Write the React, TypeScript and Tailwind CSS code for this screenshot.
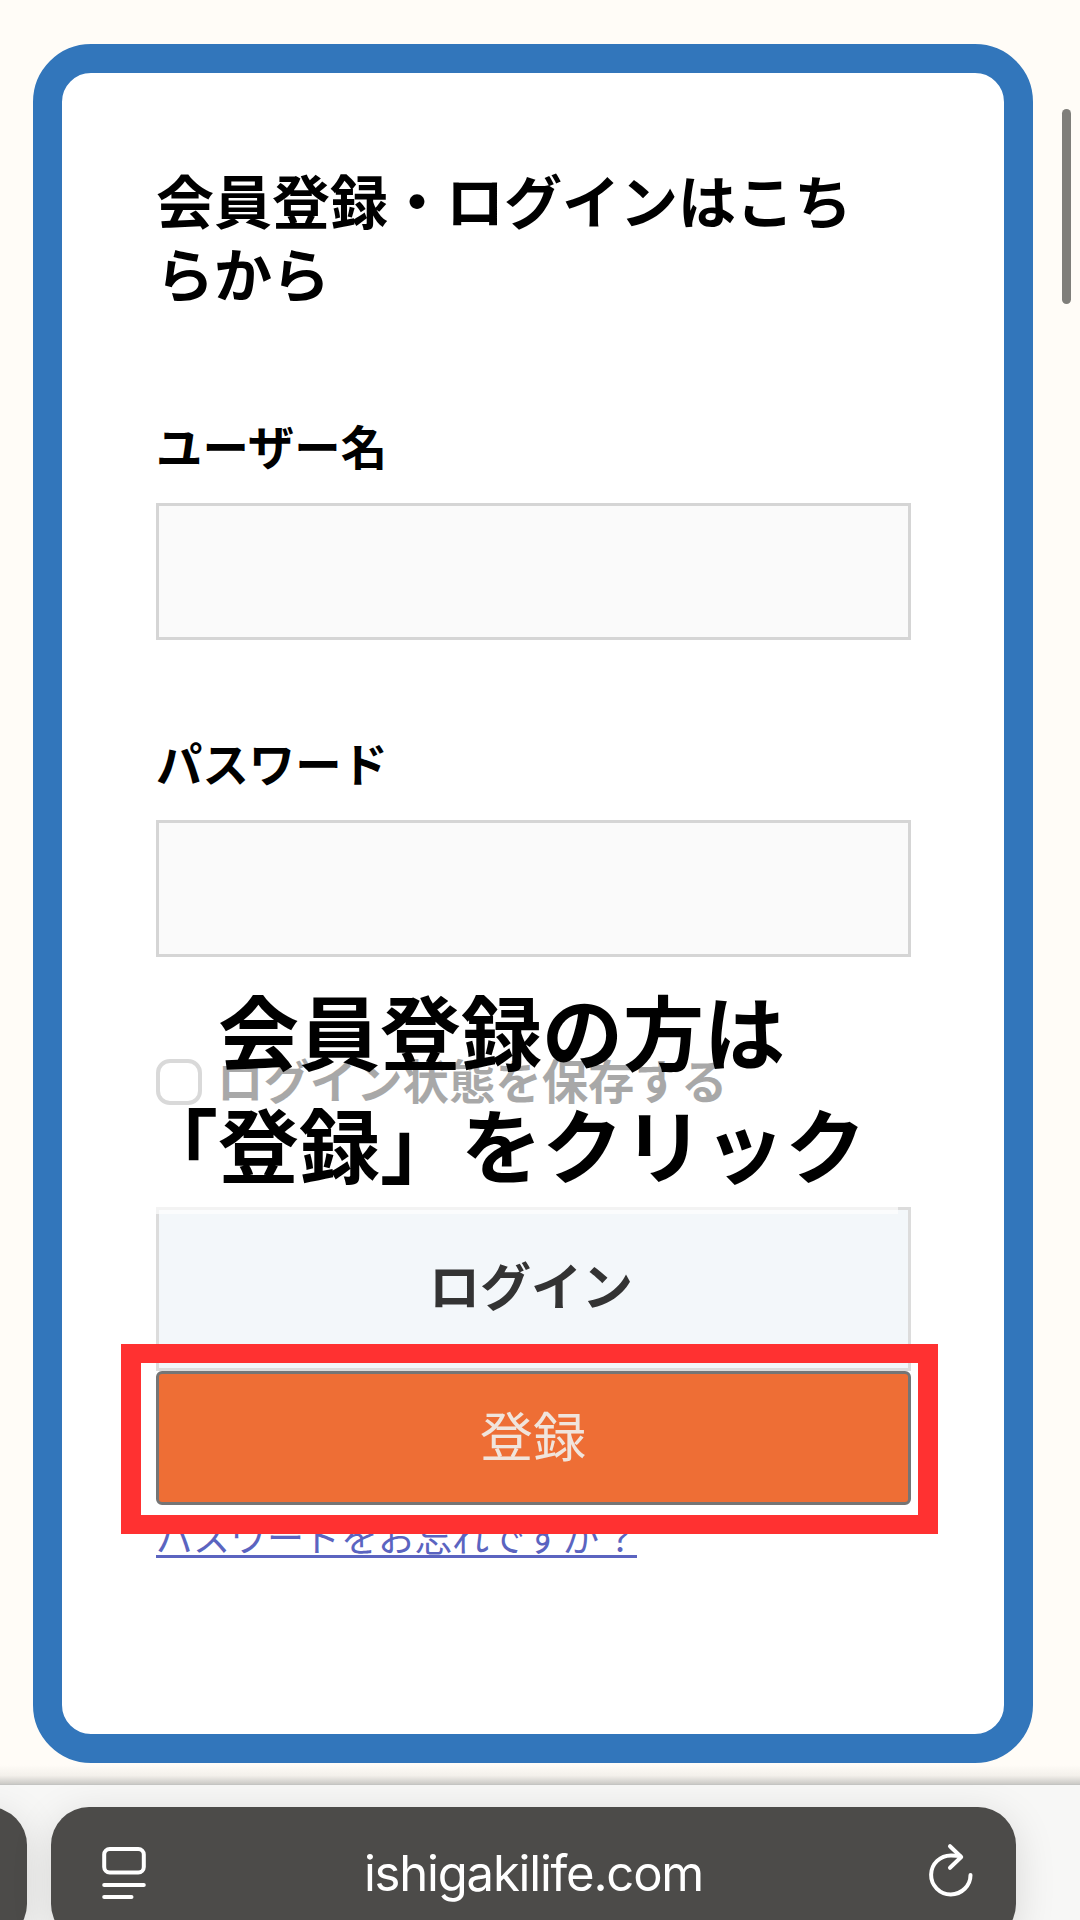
import { useState } from 'react';

interface FieldProps {
  id: string;
  label: string;
  type: string;
  className?: string;
}

function Field({ id, label, type, className = '' }: FieldProps) {
  const [value, setValue] = useState('');

  return (
    <div className={className}>
      <label htmlFor={id} className="block h-[60px] text-[46.4px] leading-[55px] font-bold text-black">
        {label}
      </label>
      <input
        id={id}
        type={type}
        value={value}
        onChange={(e) => setValue(e.target.value)}
        className="mt-[26px] block h-[137px] w-full border-3 border-[#d5d5d5] bg-[#fafafa] px-6 text-[46px] outline-none"
      />
    </div>
  );
}

function LoginCard() {
  const [remember, setRemember] = useState(false);

  return (
    <div className="mt-[44px] ml-[33px] h-[1719px] w-[1000px] rounded-[58px] border-[29px] border-[#3276bb] bg-white pt-[90px] pl-[94px]">
      <h1 className="w-[755px] text-[58px] leading-[73px] font-bold text-black">
        会員登録・ログインはこち
        <br />
        らから
      </h1>

      <form className="mt-[108px] w-[755px]" onSubmit={(e) => e.preventDefault()}>
        <Field id="username" label="ユーザー名" type="text" />
        <Field id="password" label="パスワード" type="password" className="mt-[94px]" />

        <label className="mt-[102px] flex h-[46px] items-center gap-[15px] text-[46.4px] leading-[46px] font-bold text-black">
          <input
            type="checkbox"
            checked={remember}
            onChange={(e) => setRemember(e.target.checked)}
            className="size-[46px] shrink-0 appearance-none rounded-[14px] border-4 border-[#8f8f8f] bg-white"
          />
          <span className="pb-[6px] whitespace-nowrap">ログイン状態を保存する</span>
        </label>

        <button
          type="submit"
          className="mt-[102px] block h-[164px] w-full border-3 border-[#dcdcdc] bg-[#f3f7fa] pr-[5px] pb-[10px] text-[51px] font-bold text-[#333333]"
        >
          ログイン
        </button>
        <button
          type="button"
          className="block h-[134px] w-full rounded-[6px] border-3 border-[#757575] bg-[#ee6e35] pr-[1px] pb-[7px] text-[53px] font-normal text-[#f0e4dc]"
        >
          登録
        </button>
      </form>

      <a
        href="#"
        className="mt-[5px] block w-[481px] border-b-3 border-[#5b64c0] pt-[7px] text-[37px] leading-[38px] font-normal whitespace-nowrap text-[#5b64c0]"
      >
        パスワードをお忘れですか<span className="ml-[3px]">？</span>
      </a>
    </div>
  );
}

function ReaderIcon() {
  return (
    <svg width="46" height="54" viewBox="0 0 46 54" fill="none" stroke="white" strokeWidth="4" strokeLinecap="round">
      <rect x="3.2" y="3" width="39.6" height="23.5" rx="5.5" />
      <path d="M3.2 39H42.8M3.2 51H30.5" />
    </svg>
  );
}

function ReloadIcon() {
  return (
    <svg
      width="46"
      height="54"
      viewBox="0 0 46 54"
      fill="none"
      stroke="white"
      strokeWidth="4"
      strokeLinecap="round"
      strokeLinejoin="round"
      className="overflow-visible"
    >
      <path d="M33 10.1C30 9.4 27 9.4 24.2 9.4A19.7 19.5 0 1 0 43.5 28.9" />
      <path d="M23 0.2L34.2 11L23 21.8" />
    </svg>
  );
}

export default function App() {
  return (
    <div className="relative flex h-[1920px] w-[1080px] flex-col overflow-hidden bg-[#fffcf7] font-['Noto_Sans_CJK_JP',sans-serif]">
      <LoginCard />

      {/* Browser toolbar */}
      <div className="h-[21px] shrink-0 bg-linear-to-b from-[#fffcf7] from-10% via-[#f3f0eb] via-60% to-[#cbcac6]" />
      <div className="flex h-[136px] shrink-0 items-start gap-[24px] overflow-hidden border-t border-[#c4c4c2] bg-[#f7f7f6] pt-[22px]">
        <div className="-ml-[60px] h-[135px] w-[87px] shrink-0 rounded-[38px] bg-[#4c4b49] shadow-[0_8px_40px_rgba(0,0,0,0.13)]" />
        <div className="flex h-[135px] w-[965px] shrink-0 items-start justify-between rounded-[38px] bg-[#4c4b49] px-[50px] pt-[39px] shadow-[0_8px_40px_rgba(0,0,0,0.13)]">
          <ReaderIcon />
          <span className="-mt-[2px] mr-[7px] font-['Inter',sans-serif] text-[49px] leading-[60px] tracking-[-1.2px] text-white">
            ishigakilife.com
          </span>
          <div className="-mr-[7px]">
            <ReloadIcon />
          </div>
        </div>
      </div>

      {/* Scroll indicator */}
      <div className="absolute top-[109px] left-[1062px] h-[195px] w-[9px] rounded-full bg-[#7f7e7a]" />

      {/* Caption over the form */}
      <div className="absolute top-[970px] left-[105px] h-[244px] w-[793px] bg-white/66 pt-[2px] text-center text-[81px] leading-[113px] font-bold whitespace-nowrap text-black">
        <p>会員登録の方は</p>
        <p>「登録」をクリック</p>
      </div>

      {/* Highlight around the register button */}
      <div className="pointer-events-none absolute top-[1344px] left-[121px] h-[190px] w-[817px] border-x-20 border-y-[19px] border-[#ff3131]" />
    </div>
  );
}
